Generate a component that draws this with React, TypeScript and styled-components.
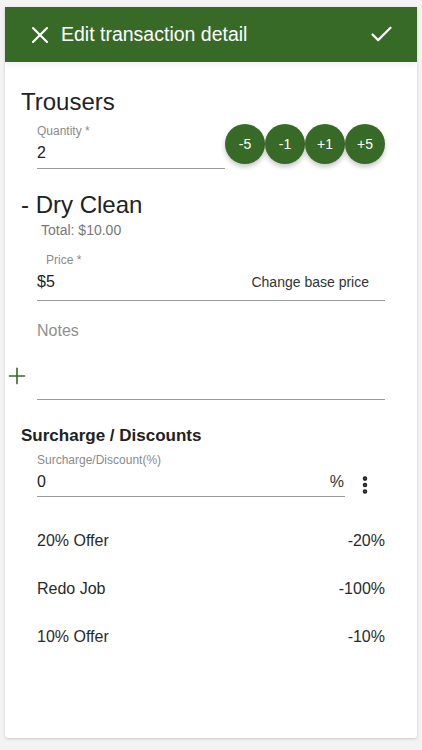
import React from 'react';
import styled, { createGlobalStyle } from 'styled-components';
import { X, Check, Plus, EllipsisVertical } from 'lucide-react';

const GREEN = '#386a27';

const GlobalStyle = createGlobalStyle`
  html, body {
    margin: 0;
    padding: 0;
    background: #f3f3f3;
    font-family: "Liberation Sans", Arial, sans-serif;
    color: #222;
  }
`;

const Page = styled.div`
  padding: 7px 5px 0;
  height: 750px;
  box-sizing: border-box;
`;

const Card = styled.div`
  background: #fff;
  height: 731px;
  box-shadow: 0 1px 3px rgba(0, 0, 0, 0.18);
  border-radius: 0 0 3px 3px;
  overflow: hidden;
`;

const Header = styled.div`
  height: 55px;
  background: ${GREEN};
  display: flex;
  align-items: center;
  padding: 0 22px 0 21px;
  color: #fff;
  box-shadow: 0 3px 6px rgba(0, 0, 0, 0.06);
`;

const HeaderTitle = styled.div`
  flex: 1;
  margin-left: 7px;
  font-size: 19.5px;
`;

const Body = styled.div`
  padding: 26px 32px 0 16px;
`;

const ItemTitle = styled.div<{ $top?: number }>`
  font-size: 24px;
  line-height: 28px;
  margin-top: ${(p) => p.$top ?? 0}px;
`;

const Row = styled.div<{ $top?: number }>`
  display: flex;
  align-items: flex-start;
  margin-top: ${(p) => p.$top ?? 0}px;
`;

const Field = styled.div<{ $top?: number; $pad?: number }>`
  flex: 1;
  margin-left: 16px;
  margin-top: ${(p) => p.$top ?? 0}px;
  border-bottom: 1px solid #9a9a9a;
  padding-bottom: ${(p) => p.$pad ?? 4}px;
`;

const Label = styled.div<{ $indent?: number }>`
  font-size: 12px;
  line-height: 14px;
  color: #8a8a8a;
  padding-left: ${(p) => p.$indent ?? 0}px;
`;

const InputLine = styled.div`
  margin-top: 4px;
  height: 22px;
  display: flex;
  align-items: center;
  justify-content: space-between;
  font-size: 16px;
`;

const Adornment = styled.span<{ $size?: number }>`
  font-size: ${(p) => p.$size ?? 16}px;
  padding-right: ${(p) => (p.$size ? 16 : 1)}px;
  color: #333;
`;

const Steppers = styled.div`
  display: flex;
`;

const Step = styled.button`
  width: 40px;
  height: 40px;
  border-radius: 50%;
  border: none;
  background: ${GREEN};
  color: #fff;
  font-family: inherit;
  font-size: 14px;
  padding: 0;
  box-shadow: 0 3px 5px rgba(0, 0, 0, 0.22);
`;

const Total = styled.div`
  margin: 3px 0 0 20px;
  font-size: 14px;
  line-height: 16px;
  color: #777;
`;

const NotesRow = styled.div`
  display: flex;
  margin-left: -12px;
  margin-top: 19px;
`;

const PlusIcon = styled.div`
  align-self: flex-end;
  margin: 0 0 11px -5px;
  color: ${GREEN};
  display: flex;
`;

const NotesField = styled.div`
  flex: 1;
  margin-left: 7px;
  height: 79px;
  border-bottom: 1px solid #9a9a9a;
  font-size: 16px;
  line-height: 22px;
  color: #8f8f8f;
`;

const SectionTitle = styled.div`
  margin-top: 26px;
  font-size: 17px;
  font-weight: bold;
  line-height: 20px;
`;

const Kebab = styled.div`
  width: 40px;
  display: flex;
  justify-content: center;
  margin-top: 28px;
  color: #222;
`;

const List = styled.div`
  margin: 20px 0 0 16px;
`;

const ListRow = styled.div`
  height: 48px;
  display: flex;
  align-items: center;
  justify-content: space-between;
  font-size: 16px;
  color: #2a2a2a;
`;

const offers = [
  { name: '20% Offer', value: '-20%' },
  { name: 'Redo Job', value: '-100%' },
  { name: '10% Offer', value: '-10%' },
];

export default function App() {
  return (
    <Page>
      <GlobalStyle />
      <Card>
        <Header>
          <X size={28} strokeWidth={1.8} />
          <HeaderTitle>Edit transaction detail</HeaderTitle>
          <Check size={27} strokeWidth={1.9} />
        </Header>
        <Body>
          <ItemTitle>Trousers</ItemTitle>
          <Row $top={8}>
            <Field>
              <Label>Quantity *</Label>
              <InputLine>2</InputLine>
            </Field>
            <Steppers>
              {['-5', '-1', '+1', '+5'].map((s) => (
                <Step key={s}>{s}</Step>
              ))}
            </Steppers>
          </Row>
          <ItemTitle $top={22}>- Dry Clean</ItemTitle>
          <Total>Total: $10.00</Total>
          <Row>
            <Field $top={15} $pad={7}>
              <Label $indent={9}>Price *</Label>
              <InputLine>
                <span>$5</span>
                <Adornment $size={14}>Change base price</Adornment>
              </InputLine>
            </Field>
          </Row>
          <NotesRow>
            <PlusIcon>
              <Plus size={26} strokeWidth={1.5} />
            </PlusIcon>
            <NotesField>Notes</NotesField>
          </NotesRow>
          <SectionTitle>Surcharge / Discounts</SectionTitle>
          <Row>
            <Field $top={7} $pad={3}>
              <Label>Surcharge/Discount(%)</Label>
              <InputLine>
                <span>0</span>
                <Adornment>%</Adornment>
              </InputLine>
            </Field>
            <Kebab>
              <EllipsisVertical size={22} strokeWidth={3} />
            </Kebab>
          </Row>
          <List>
            {offers.map((o) => (
              <ListRow key={o.name}>
                <span>{o.name}</span>
                <span>{o.value}</span>
              </ListRow>
            ))}
          </List>
        </Body>
      </Card>
    </Page>
  );
}
